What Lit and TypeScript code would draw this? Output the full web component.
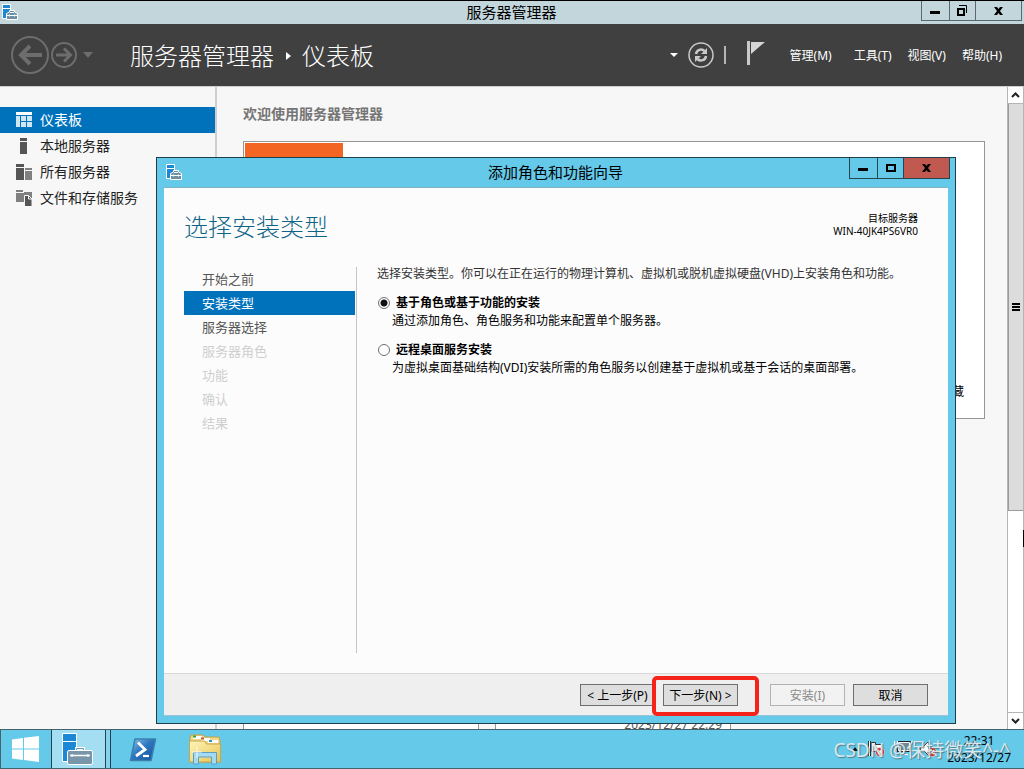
import { LitElement, html, css, svg } from "lit";
import { customElement, state } from "lit/decorators.js";
import { classMap } from "lit/directives/class-map.js";

const serverIcon = html`<svg width="16" height="16" viewBox="0 0 16 16" aria-hidden="true">
  <path d="M.5.5h8v14h-8z" fill="#1c87d4" stroke="#fff"/>
  <path d="M1 4.500h7" stroke="#fff"/>
  <path d="M4.500 15.500v-6l3-1.500v-1.500h5V8l3 1.500v6z" fill="#6d8ea3" stroke="#fff"/>
  <path d="M8 8.500h4M5 11.500h10M7.500 10.500v2M12.500 10.500v2" stroke="#fff" fill="none"/>
</svg>`;

const navIcons = {
  dashboard: svg`<path d="M0 0h16v3H0z" fill="#fff"/><path d="M0 4h4v11H0zM5 4h5v5H5zM11 4h5v5h-5zM5 10h5v5H5zM11 10h5v5h-5z" fill="#cfe6f7"/>`,
  local: svg`<path d="M4 0h7v3H4zM4 4h7v12H4z" fill="#555"/>`,
  all: svg`<path d="M0 0h8v3H0zM0 4h8v12H0z" fill="#555"/><path d="M9 4h7v2H9zM9 7h7v9H9z" fill="#808080"/>`,
  files: svg`<path d="M0 0h7v2H0zM0 3h9v9H0zM8 2h8v9H8z" fill="#808080"/><path d="M8.500 5.500h4L16 9v7.500H8.500z" fill="#555" stroke="#f7f7f7"/><path d="M12.500 5.500V9H16" fill="none" stroke="#f7f7f7"/>`,
};

const glyphs = {
  min: svg`<path d="M4 8h10v3H4z" fill="#000"/>`,
  max: svg`<path d="M6 5h8v6H6z" fill="none" stroke="#000" stroke-width="2"/>`,
  restore: svg`<path d="M5 6h6v6H5z" fill="none" stroke="#000" stroke-width="2"/><path d="M6 2.500h7.500V10" fill="none" stroke="#000"/>`,
  close: svg`<path d="M5 4h3l1.500 2L11 4h3l-3 4 3 4h-3l-1.500-2L8 12H5l3-4z" fill="#000"/>`,
};

const glyph = (name: keyof typeof glyphs) =>
  html`<svg width="20" height="16" viewBox="0 0 20 16" aria-hidden="true">${glyphs[name]}</svg>`;

@customElement("window-controls")
class WindowControls extends LitElement {
  static properties = { dialog: { type: Boolean, reflect: true } };
  declare dialog: boolean;

  static styles = css`
    :host { display: flex; align-self: flex-start; }
    button {
      box-sizing: border-box; height: 20px; padding: 0; margin: 0;
      display: flex; align-items: center; justify-content: center;
      background: none; border: 1px solid #5b686d; border-top: 0; border-right: 0;
    }
    .min { width: 28px; }
    .max { width: 26px; }
    .close { width: 47px; border-right: 1px solid #5b686d; }
    :host([dialog]) button { height: 21px; border-color: #27454f; }
    :host([dialog]) .close { background: #c0594f; }
  `;

  render() {
    return html`
      <button class="min" aria-label="最小化">${glyph("min")}</button>
      <button class="max" aria-label="最大化">${glyph(this.dialog ? "max" : "restore")}</button>
      <button class="close" aria-label="关闭">${glyph("close")}</button>
    `;
  }
}

@customElement("role-wizard")
class RoleWizard extends LitElement {
  @state() private choice = 0;

  private steps = [
    { text: "开始之前", kind: "" },
    { text: "安装类型", kind: "current" },
    { text: "服务器选择", kind: "" },
    { text: "服务器角色", kind: "off" },
    { text: "功能", kind: "off" },
    { text: "确认", kind: "off" },
    { text: "结果", kind: "off" },
  ];

  private options = [
    { title: "基于角色或基于功能的安装", text: "通过添加角色、角色服务和功能来配置单个服务器。" },
    { title: "远程桌面服务安装", text: "为虚拟桌面基础结构(VDI)安装所需的角色服务以创建基于虚拟机或基于会话的桌面部署。" },
  ];

  static styles = css`
    :host {
      box-sizing: border-box; display: flex; flex-direction: column;
      background: #65c9e9; border: 1px solid #1d3f4b; padding: 0 7px 7px;
      font-size: 12px; line-height: 18px; color: #000;
    }
    .title { display: flex; height: 29px; flex: none; }
    .title svg { margin: 6px 0 0 2px; }
    .title h2 { margin: 0; flex: 1; text-align: center; font: inherit; font-size: 15px; line-height: 29px; padding-left: 80px; }
    window-controls { margin-right: -2px; }
    .page { flex: 1; min-height: 0; display: flex; flex-direction: column; background: #fcfcfc; border-top: 1px solid #7fb4c8; }
    .head { display: flex; justify-content: space-between; align-items: flex-start; padding: 20px 30px 0 20px; height: 59px; }
    h1 { margin: 0; font-size: 24px; line-height: 38px; font-weight: 300; color: #0f6486; }
    .target { text-align: right; font-size: 10px; line-height: 13px; padding-top: 4px; }
    .cols { flex: 1; min-height: 0; display: flex; padding: 0 20px 20px; }
    nav { flex: none; width: 171px; border-right: 1px solid #c4c4c4; padding-right: 1px; }
    nav a { display: block; height: 24px; line-height: 24px; padding-left: 18px; font-size: 13px; color: #555; text-decoration: none; }
    nav .current { background: #0072bc; color: #fff; }
    nav .off { color: #cfcfcf; }
    .content { flex: 1; padding-left: 20px; }
    .content p { margin: 0; line-height: 14px; color: #333; }
    fieldset { border: 0; margin: 13px 0 0; padding: 0; display: flex; flex-direction: column; gap: 12px; }
    .opt label { display: flex; align-items: center; gap: 6px; font-weight: 700; height: 18px; }
    .content .desc { color: #000; padding-left: 15px; line-height: 17px; }
    input {
      appearance: none; box-sizing: border-box; width: 12px; height: 12px; margin: 0 0 0 1px;
      border: 1px solid #707070; border-radius: 50%; background: #fff;
    }
    input:checked { background: radial-gradient(circle, #111 0 3px, #fff 4px); }
    footer {
      display: flex; justify-content: flex-end; align-items: flex-start; gap: 8px; height: 43px; box-sizing: border-box;
      padding: 10px 20px 0; background: #efefef; border-top: 1px solid #d9d9d9; border-bottom: 1px solid #9cc4d2;
    }
    footer button {
      box-sizing: border-box; width: 75px; height: 22px; padding: 1px 0 0; margin: 0; white-space: nowrap;
      font: inherit; line-height: 20px; background: #dedede; border: 1px solid #6e6e6e; color: #000;
    }
    footer button:disabled { background: #f2f2f2; border-color: #b3b3b3; color: #8a8a8a; }
    .next { position: relative; margin-right: 24px; }
    .mark {
      position: absolute; inset: -8px -21px -10px -11px; border: 4px solid #f5241b; border-radius: 5px; pointer-events: none;
    }
  `;

  render() {
    return html`
      <div class="title">
        ${serverIcon}
        <h2>添加角色和功能向导</h2>
        <window-controls dialog></window-controls>
      </div>
      <div class="page">
        <div class="head">
          <h1>选择安装类型</h1>
          <div class="target">目标服务器<br />WIN-40JK4PS6VR0</div>
        </div>
        <div class="cols">
          <nav>
            ${this.steps.map((s) => html`<a href="#" class=${s.kind}>${s.text}</a>`)}
          </nav>
          <div class="content">
            <p>选择安装类型。你可以在正在运行的物理计算机、虚拟机或脱机虚拟硬盘(VHD)上安装角色和功能。</p>
            <fieldset>
              ${this.options.map(
                (o, i) => html`<div class="opt">
                  <label>
                    <input type="radio" name="kind" .checked=${this.choice === i} @change=${() => (this.choice = i)} />
                    ${o.title}
                  </label>
                  <p class="desc">${o.text}</p>
                </div>`
              )}
            </fieldset>
          </div>
        </div>
        <footer>
          <button>&lt; 上一步(P)</button>
          <div class="next"><button>下一步(N) &gt;</button><span class="mark"></span></div>
          <button disabled>安装(I)</button>
          <button>取消</button>
        </footer>
      </div>
    `;
  }
}

@customElement("task-bar")
class TaskBar extends LitElement {
  static styles = css`
    :host {
      box-sizing: border-box; display: flex; height: 40px; flex: none; position: relative;
      background: #65c9e9; border: 1px solid #46636d; border-right: 0; color: #10252d;
    }
    button { border: 0; padding: 0; margin: 0; background: none; display: flex; align-items: center; justify-content: center; }
    .start { width: 50px; padding-right: 3px; box-sizing: border-box; }
    .active { width: 55px; box-sizing: border-box; padding-right: 4px; background: #a3def3; border: solid #24424c; border-width: 0 1px; }
    .stack { width: 5px; box-sizing: border-box; background: #86d2ee; border-right: 1px solid #24424c; }
    .app { width: 62px; }
    .app.shell { margin-left: 1px; }
    .app svg { margin-top: 2px; }
    .tray { margin-left: auto; display: flex; align-items: center; gap: 8px; }
    .clock { margin: 0 13px 0 2px; text-align: center; font-size: 12px; line-height: 17px; color: #000; }
    .brand {
      position: absolute; right: 14px; top: 7px; font-size: 19px; line-height: 26px; white-space: nowrap;
      color: #e3edf1; text-shadow: 1px 1px 1px #52727c; opacity: 0.9;
    }
  `;

  render() {
    const badge = svg`<circle cx="13" cy="12" r="4.500" fill="#d3302a" stroke="#fff" stroke-width=".5"/><path d="M11 10l4 4M15 10l-4 4" stroke="#fff" stroke-width="1.500"/>`;
    return html`
      <button class="start" aria-label="开始">
        <svg width="28" height="28" viewBox="0 0 28 28">
          <path d="M1 4.500L12 3v10.500H1zM13 2.800L28 1v12.500H13zM1 14.500h11V25L1 23.500zM13 14.500h15V27l-15-2z" fill="#fff"/>
        </svg>
      </button>
      <button class="active" aria-label="服务器管理器">
        <svg width="32" height="34" viewBox="0 0 32 34">
          <path d="M1.500 1.500h14v28h-14z" fill="#1c87d4" stroke="#fff"/>
          <path d="M1 9.500h14" stroke="#fff"/>
          <path d="M15.500 19v-2.500h7V19" fill="none" stroke="#fff" stroke-width="3"/>
          <path d="M15.500 19v-2.500h7V19" fill="none" stroke="#6f8fa5"/>
          <rect x="6.500" y="18.500" width="25" height="14" rx="1.500" fill="#7895a9" stroke="#fff"/>
          <path d="M9 23.500h20M11 22v3M27 22v3" stroke="#fff" stroke-width="1.300"/>
        </svg>
      </button>
      <span class="stack"></span>
      <button class="app shell" aria-label="PowerShell">
        <svg width="28" height="26" viewBox="0 0 28 26">
          <defs><linearGradient id="ps" x2="1" y2="1"><stop stop-color="#8cc8ec"/><stop offset=".45" stop-color="#2e78c0"/><stop offset="1" stop-color="#174f9a"/></linearGradient></defs>
          <path d="M6 2h20.500L22 23.500H1.500z" fill="url(#ps)" stroke="#3c7fae" stroke-width="1.500" stroke-linejoin="round"/>
          <path d="M9 5.500l7 7L7 19" fill="none" stroke="#fff" stroke-width="2.800"/><path d="M14 19h6" stroke="#fff" stroke-width="2.200"/>
        </svg>
      </button>
      <button class="app" aria-label="文件资源管理器">
        <svg width="34" height="32" viewBox="0 0 34 32">
          <defs><linearGradient id="fo" x2="1" y2="1"><stop stop-color="#fff5ba"/><stop offset="1" stop-color="#e6c452"/></linearGradient></defs>
          <path d="M2 4l1-3h12l2 2h14l1 3v22H2z" fill="#efd98c" stroke="#c49f45"/>
          <path d="M5 2h9v3H5zM13 4h9v3h-9z" fill="#fff"/><path d="M5 1.500h3v2H5z" fill="#32a532"/><path d="M13 3.500h3v2h-3z" fill="#cc5125"/>
          <path d="M1.500 7h15l2 3h14v18h-31z" fill="url(#fo)" stroke="#c8a548"/>
          <path d="M20 6h10v3H20z" fill="#fff"/><path d="M21 6h3v2h-3z" fill="#3894b8"/>
          <path d="M5.500 30V18.500h23V30h-5v-7h-13v7z" fill="#a4dbf2" stroke="#5a9fc4"/>
          <path d="M9 13v11M4 18h10" stroke="#fff" stroke-width=".8"/>
        </svg>
      </button>
      <div class="tray">
        <svg width="8" height="16" viewBox="0 0 8 16"><path d="M4 6l3 4H1z" fill="#111"/></svg>
        <svg width="18" height="18" viewBox="0 0 18 18"><path d="M2.500 1v15" stroke="#333" stroke-width="3"/><path d="M2.500 1v15" stroke="#fff"/><path d="M4.500 2.500h4v2h6v7h-10z" fill="#fff" stroke="#333"/>${badge}</svg>
        <svg width="18" height="18" viewBox="0 0 18 18"><path d="M5.500 2.500h11v8h-11z" fill="#5b7d88" stroke="#222" stroke-width="3"/><path d="M5.500 2.500h11v8h-11z" fill="#6b8b96" stroke="#fff"/><path d="M7 14.500h8M10.500 11v3M1.500 1v5h3v-5M3 6v10" stroke="#fff" fill="none"/></svg>
        <svg width="18" height="18" viewBox="0 0 18 18"><path d="M1.500 6.500h3l5-5v14l-5-5h-3z" fill="#fff" stroke="#444"/>${badge}</svg>
        <div class="clock">22:31<br />2023/12/27</div>
      </div>
      <span class="brand">CSDN @保持微笑^-^</span>
    `;
  }
}

@customElement("app-root")
class AppRoot extends LitElement {
  private nav: { icon: keyof typeof navIcons; text: string }[] = [
    { icon: "dashboard", text: "仪表板" },
    { icon: "local", text: "本地服务器" },
    { icon: "all", text: "所有服务器" },
    { icon: "files", text: "文件和存储服务" },
  ];

  static styles = css`
    :host {
      display: flex; flex-direction: column; height: 100vh; position: relative; overflow: hidden;
      box-sizing: border-box; border-top: 1px solid #000; background: #f7f7f7;
      font-family: "Noto Sans", "Noto Sans CJK SC", sans-serif; font-size: 12px; line-height: 18px; color: #000;
    }
    .caption { display: flex; height: 23px; flex: none; background: #c3d6dc; }
    .caption svg { margin: 3px 0 0 2px; flex: none; }
    .caption .name { flex: 1; text-align: center; font-size: 15px; line-height: 23px; padding-left: 84px; }
    window-controls { margin-right: 2px; }
    header {
      display: flex; align-items: center; height: 62px; flex: none; background: #404040; color: #fff;
      border-bottom: 1px solid #cfcfcf; padding: 0 22px 0 10px;
    }
    button { font: inherit; color: inherit; background: none; border: 0; padding: 0; margin: 0; display: flex; }
    .crumb { display: flex; align-items: center; gap: 11px; margin: 0 0 0 36px; padding-top: 1px; font-size: 24px; line-height: 36px; font-weight: 300; }
    .tools { margin-left: auto; display: flex; align-items: center; }
    .tools .sync { margin: 0 10px; }
    .tools .flag { margin: 0 25px 4px 21px; }
    .bar { width: 2px; height: 18px; background: #b5b5b5; }
    .menus { display: flex; gap: 16px; padding-top: 2px; }
    .menus :first-child { margin-right: 6px; }
    .work { flex: 1; min-height: 0; display: flex; }
    .side { flex: none; width: 215px; padding-top: 20px; border-right: 2px solid #d0d0d0; }
    .side a { display: flex; align-items: center; gap: 8px; height: 26px; padding-left: 16px; font-size: 14px; color: #222; text-decoration: none; }
    .side .on { background: #0072bc; color: #fff; }
    main { flex: 1; min-width: 0; overflow: hidden; padding: 16px 22px 0 26px; }
    h3 { margin: 0 0 16px; font-size: 14px; line-height: 22px; font-weight: 700; color: #757575; }
    .panel {
      box-sizing: border-box; height: 278px; border: 1px solid #969696; background: #fff; padding: 1px 20px 17px 1px;
      display: flex; justify-content: space-between; align-items: flex-end;
    }
    .quick { align-self: flex-start; width: 98px; height: 76px; background: #f26522; }
    .tiles { display: flex; gap: 16px; margin-top: 48px; }
    .tile {
      box-sizing: border-box; width: 236px; height: 268px; background: #fff; border: 1px solid #969696;
      display: flex; justify-content: flex-end; align-items: flex-end; padding-right: 8px; color: #555;
    }
    .scroll { flex: none; width: 17px; box-sizing: border-box; display: flex; flex-direction: column; background: #fff; border: solid #b5b5b5; border-width: 0 1px; }
    .scroll button { height: 17px; align-items: center; justify-content: center; }
    .up { border-bottom: 1px solid #b5b5b5; }
    .down { border-top: 1px solid #b5b5b5; }
    .track { flex: 1; }
    .thumb { height: 67%; box-sizing: border-box; background: #dcdcdc; border: solid #9c9c9c; border-width: 0 0 1px 1px; display: flex; align-items: center; justify-content: center; }
    .caret { position: absolute; right: 0; top: 529px; width: 1px; height: 17px; background: #000; }
    role-wizard { position: absolute; left: 156px; right: 68px; top: 156px; bottom: 45px; }
  `;

  render() {
    return html`
      <div class="caption">
        ${serverIcon}
        <div class="name">服务器管理器</div>
        <window-controls></window-controls>
      </div>
      <header>
        <svg width="84" height="40" viewBox="0 0 84 40" fill="none" stroke="#6d6d6d" aria-hidden="true">
          <circle cx="20" cy="20" r="18" stroke-width="2"/>
          <path d="M32 20H11M20 11l-9 9 9 9" stroke-width="4"/>
          <circle cx="54" cy="20" r="12" stroke-width="2"/>
          <path d="M46 20h14M54 13.500l6.500 6.500-6.500 6.500" stroke-width="3"/>
          <path d="M73 17h10l-5 6z" fill="#6d6d6d" stroke="none"/>
        </svg>
        <div class="crumb">
          <span>服务器管理器</span>
          <svg width="6" height="10" viewBox="0 0 6 10"><path d="M1 1l5 4-5 4z" fill="#fff"/></svg>
          <span>仪表板</span>
        </div>
        <div class="tools">
          <svg width="8" height="6" viewBox="0 0 8 6"><path d="M0 1h8L4 5z" fill="#fff"/></svg>
          <button class="sync" aria-label="刷新">
            <svg width="26" height="26" viewBox="0 0 26 26" fill="none" stroke="#c9c9c9">
              <circle cx="13" cy="13" r="12" stroke-width="1.500"/>
              <path d="M8 12a5 5 0 0 1 8.500-3M18 14a5 5 0 0 1-8.500 3" stroke-width="2.500"/>
              <path d="M19 6v6h-6zM7 20v-6h6z" fill="#c9c9c9" stroke="none"/>
            </svg>
          </button>
          <span class="bar"></span>
          <button class="flag" aria-label="通知">
            <svg width="18" height="24" viewBox="0 0 18 24"><path d="M0 0h3v24H0z" fill="#c9c9c9"/><path d="M4 1h14L4 13z" fill="#d6d6d6"/></svg>
          </button>
          <div class="menus">
            ${["管理(M)", "工具(T)", "视图(V)", "帮助(H)"].map((m) => html`<button>${m}</button>`)}
          </div>
        </div>
      </header>
      <div class="work">
        <nav class="side">
          ${this.nav.map(
            (n, i) => html`<a href="#" class=${classMap({ on: i === 0 })}>
              <svg width="16" height="16" viewBox="0 0 16 16" aria-hidden="true">${navIcons[n.icon]}</svg>${n.text}</a>`
          )}
        </nav>
        <main>
          <h3>欢迎使用服务器管理器</h3>
          <div class="panel"><div class="quick"></div><span>隐藏</span></div>
          <div class="tiles">
            <div class="tile"></div>
            <div class="tile">2023/12/27 22:29</div>
          </div>
        </main>
        <div class="scroll">
          <button class="up" aria-label="向上滚动"><svg width="9" height="6" viewBox="0 0 9 6"><path d="M1 5l3.500-3.500L8 5" fill="none" stroke="#222" stroke-width="2"/></svg></button>
          <div class="track"><div class="thumb">
            <svg width="8" height="8" viewBox="0 0 8 8"><path d="M0 1h8M0 4h8M0 7h8" stroke="#000" stroke-width="2"/></svg>
          </div></div>
          <button class="down" aria-label="向下滚动"><svg width="9" height="6" viewBox="0 0 9 6"><path d="M1 1l3.500 3.500L8 1" fill="none" stroke="#222" stroke-width="2"/></svg></button>
        </div>
      </div>
      <span class="caret"></span>
      <role-wizard></role-wizard>
      <task-bar></task-bar>
    `;
  }
}
